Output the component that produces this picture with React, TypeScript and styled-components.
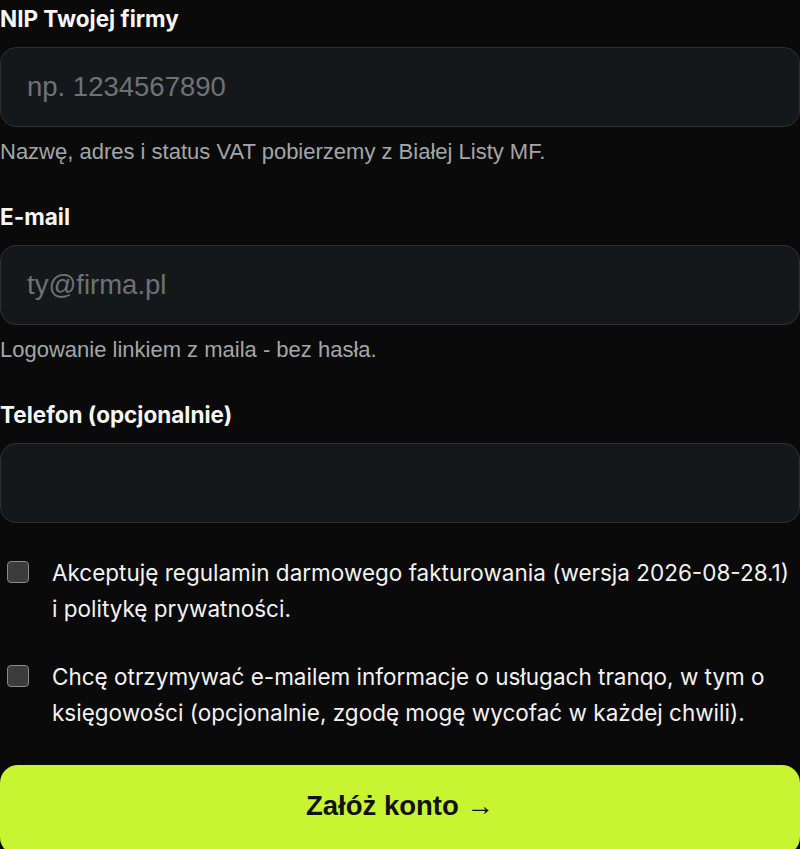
import React from 'react';
import styled, { createGlobalStyle } from 'styled-components';

const GlobalStyle = createGlobalStyle`
  html, body {
    margin: 0;
    padding: 0;
    background: #0a0a0a;
  }
  * {
    box-sizing: border-box;
  }
`;

const Page = styled.div`
  min-height: 100vh;
  background: #0a0a0a;
  color: #f4f4f4;
  padding-top: 5px;
  overflow: hidden;
`;

const Form = styled.form`
  display: flex;
  flex-direction: column;
`;

const Field = styled.div<{ $last?: boolean }>`
  display: flex;
  flex-direction: column;
  margin-bottom: ${p => (p.$last ? '32px' : '38px')};
`;

const Label = styled.label`
  font-family: Inter, 'Noto Sans', sans-serif;
  font-weight: 700;
  font-size: 22.5px;
  line-height: 28px;
  color: #f6f6f6;
  margin-bottom: 14px;
`;

const Input = styled.input`
  width: 100%;
  height: 80px;
  border: 1px solid #2b3033;
  border-radius: 16px;
  background: #15181a;
  padding: 0 26px;
  font-family: 'Liberation Sans', Arial, sans-serif;
  font-size: 27.5px;
  color: #e8e8e8;
  outline: none;

  &::placeholder {
    color: #6f7274;
  }
`;

const Hint = styled.p`
  margin: 12px 0 0;
  font-family: 'Liberation Sans', Arial, sans-serif;
  font-size: 22px;
  line-height: 26px;
  color: #a3a6a8;
`;

const Consent = styled.label`
  display: flex;
  align-items: flex-start;
  gap: 23px;
  padding-left: 7px;
  margin-bottom: 32px;
  font-family: Inter, 'Noto Sans', sans-serif;
  font-size: 22.5px;
  line-height: 36px;
  color: #f2f2f2;
  cursor: pointer;
`;

const Box = styled.input`
  appearance: none;
  flex: none;
  width: 22px;
  height: 22px;
  margin: 6px 0 0;
  border: 1.5px solid #8b8b8b;
  border-radius: 4px;
  background: #3c3c3c;
  cursor: pointer;
`;

const Submit = styled.button`
  margin-top: 2px;
  width: 100%;
  height: 90px;
  border: none;
  border-radius: 18px;
  background: #c8f532;
  color: #111;
  font-family: 'Liberation Sans', Arial, sans-serif;
  font-weight: 700;
  font-size: 27.5px;
  padding-bottom: 10px;
  cursor: pointer;
`;

const App: React.FC = () => {
  return (
    <Page>
      <GlobalStyle />
      <Form onSubmit={e => e.preventDefault()}>
        <Field>
          <Label htmlFor="nip">NIP Twojej firmy</Label>
          <Input id="nip" placeholder="np. 1234567890" />
          <Hint>Nazwę, adres i status VAT pobierzemy z Białej Listy MF.</Hint>
        </Field>
        <Field>
          <Label htmlFor="email">E-mail</Label>
          <Input id="email" type="email" placeholder="ty@firma.pl" />
          <Hint>Logowanie linkiem z maila - bez hasła.</Hint>
        </Field>
        <Field $last>
          <Label htmlFor="phone">Telefon (opcjonalnie)</Label>
          <Input id="phone" type="tel" />
        </Field>
        <Consent>
          <Box type="checkbox" />
          <span>
            Akceptuję regulamin darmowego fakturowania (wersja 2026-08-28.1) i politykę
            prywatności.
          </span>
        </Consent>
        <Consent>
          <Box type="checkbox" />
          <span>
            Chcę otrzymywać e-mailem informacje o usługach tranqo, w tym o księgowości
            (opcjonalnie, zgodę mogę wycofać w każdej chwili).
          </span>
        </Consent>
        <Submit type="submit">Załóż konto →</Submit>
      </Form>
    </Page>
  );
};

export default App;
